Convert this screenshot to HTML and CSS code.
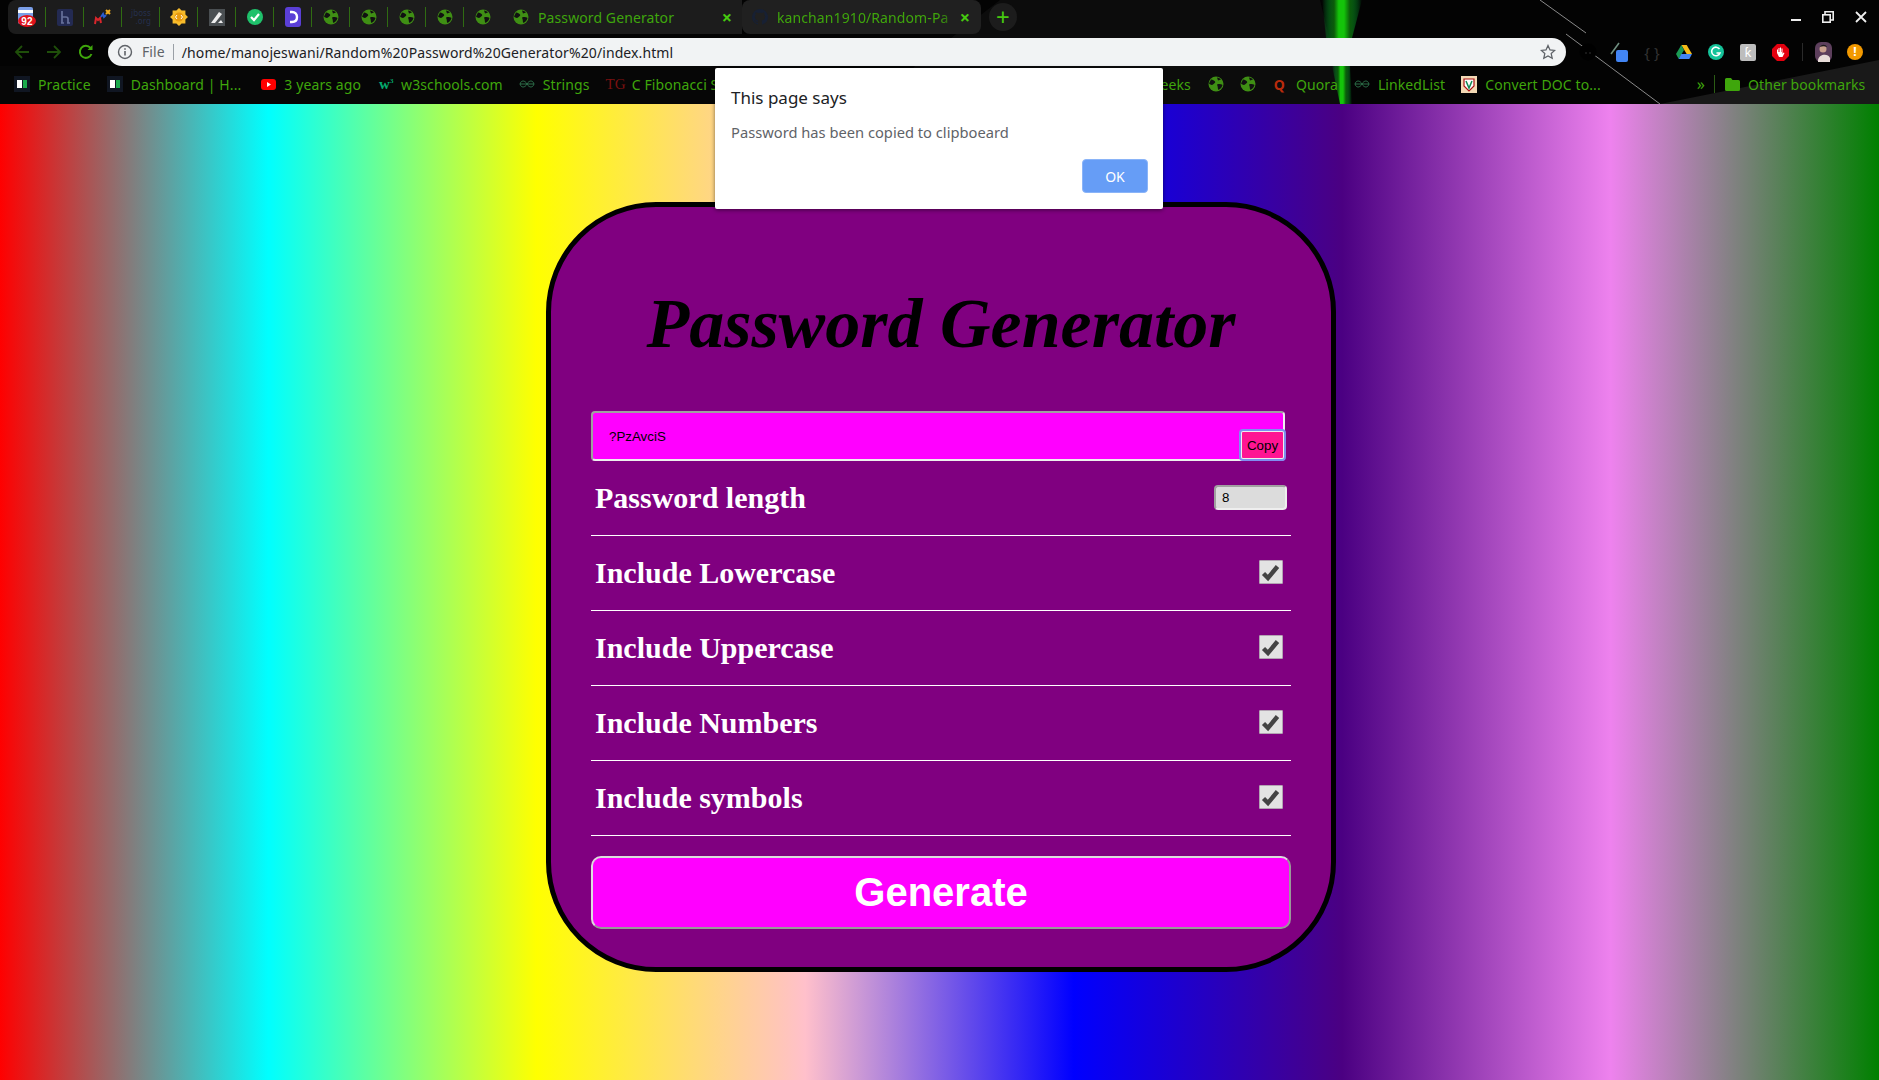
FILE: index.html
```html
<!DOCTYPE html>
<html>
<head>
  <title>Password Generator</title>
  <link rel="stylesheet" href="styles.css">
</head>
<body>
  <header class="browser">
    <svg class="wallpaper" width="1879" height="104" viewBox="0 0 1879 104">
      <defs>
        <linearGradient id="glow" x1="0" x2="1" y1="0" y2="0">
          <stop offset="0" stop-color="#0a3" stop-opacity="0"/>
          <stop offset="0.3" stop-color="#0b5a0a"/>
          <stop offset="0.42" stop-color="#14c40a"/>
          <stop offset="0.55" stop-color="#14c40a"/>
          <stop offset="0.7" stop-color="#0b5a0a"/>
          <stop offset="1" stop-color="#0a3" stop-opacity="0"/>
        </linearGradient>
      </defs>
      <polygon points="0,66 800,66 830,104 0,104" fill="#060606"/>
      <polygon points="1000,0 1320,0 1345,104 880,104 915,66" fill="#0c0c0c"/>
      <polygon points="1660,104 1879,60 1879,104" fill="#191919"/>
      <polygon points="1322,0 1362,0 1352,38 1326,38" fill="url(#glow)"/>
      <polygon points="1332,66 1350,66 1352,104 1340,104" fill="url(#glow)"/>
      <line x1="1540" y1="0" x2="1586" y2="33" stroke="#8a8a8a"/>
      <line x1="1566" y1="34" x2="1660" y2="104" stroke="#8a8a8a"/>
    </svg>

    <div class="tab-strip">
      <div class="pin-tab first"><svg width="20" height="20" viewBox="0 0 20 20"><rect x="1" width="15" height="17" rx="2" fill="#7b9fe8"/><rect x="1" y="3" width="15" height="3" fill="#fff"/><ellipse cx="10" cy="14" rx="9" ry="6" fill="#e0121b"/><text x="10" y="18" class="fav-num">92</text></svg></div>
      <div class="pin-tab"><svg width="16" height="17" viewBox="0 0 16 17"><rect width="16" height="17" rx="2" fill="#232a52"/><path d="M5 2v12M4 14h3M5 8h4c2 0 2 1 2 2v4M10 14h3" stroke="#66709a" stroke-width="1.700" fill="none"/></svg></div>
      <div class="pin-tab"><svg width="18" height="16" viewBox="0 0 18 16"><path d="M1 15l1-6 2 2 2-2 1 5" stroke="#d8262c" stroke-width="2" fill="none"/><path d="M7 8l2-3 1 3 2-2" stroke="#2a5cd0" stroke-width="2" fill="none"/><path d="M12 5l4-4M12 1l4 4" stroke="#f0ad1e" stroke-width="2" fill="none"/></svg></div>
      <div class="pin-tab pin-text">jboss<br>.org</div>
      <div class="pin-tab"><svg width="18" height="18" viewBox="0 0 18 18"><path d="M9 0l2.600 2.600h3.800v3.800L18 9l-2.600 2.600v3.800h-3.800L9 18l-2.600-2.600H2.600v-3.800L0 9l2.600-2.600V2.600h3.800z" fill="#f7bb2a"/><circle cx="9" cy="9" r="4.500" fill="#e89a10"/><path d="M7 7L5.500 9 7 11M11 7l1.500 2L11 11" stroke="#fff" fill="none"/></svg></div>
      <div class="pin-tab"><svg width="16" height="17" viewBox="0 0 16 17"><rect width="16" height="17" fill="#4a4f52"/><path d="M2 14L10 3l3 2-7 9z" fill="#eee"/><path d="M9 14l3-3 2 3z" fill="#eee"/></svg></div>
      <div class="pin-tab"><svg width="16" height="16" viewBox="0 0 16 16"><circle cx="8" cy="8" r="8" fill="#1fc16b"/><path d="M4 8l3 3 5-6" stroke="#fff" stroke-width="2.200" fill="none"/></svg></div>
      <div class="pin-tab"><svg width="16" height="20" viewBox="0 0 16 20"><rect width="16" height="20" rx="3" fill="#5a3fd6"/><path d="M5 5h2c3 0 5 2 5 5s-2 5-5 5H5" stroke="#fff" stroke-width="2.400" fill="none"/></svg></div>
      <div class="pin-tab"><svg class="globe" width="16" height="16" viewBox="0 0 16 16"><use href="#globe-shape"/></svg></div>
      <div class="pin-tab"><svg class="globe" width="16" height="16" viewBox="0 0 16 16"><use href="#globe-shape"/></svg></div>
      <div class="pin-tab"><svg class="globe" width="16" height="16" viewBox="0 0 16 16"><use href="#globe-shape"/></svg></div>
      <div class="pin-tab"><svg class="globe" width="16" height="16" viewBox="0 0 16 16"><use href="#globe-shape"/></svg></div>
      <div class="pin-tab last"><svg class="globe" width="16" height="16" viewBox="0 0 16 16"><use href="#globe-shape"/></svg></div>
      <div class="tab current">
        <svg class="globe" width="16" height="16" viewBox="0 0 16 16"><use href="#globe-shape"/></svg>
        <span class="tab-title">Password Generator</span>
        <span class="tab-close">×</span>
      </div>
      <div class="tab active">
        <svg width="16" height="16" viewBox="0 0 16 16"><path d="M8 0a8 8 0 0 0-2.500 15.600c.4.100.5-.2.5-.4v-1.400c-2.200.5-2.700-1-2.700-1-.4-.9-.9-1.200-.9-1.200-.7-.5.100-.5.100-.5.800.100 1.200.8 1.200.8.700 1.200 1.900.9 2.300.7.100-.5.300-.9.500-1.100-1.800-.2-3.600-.9-3.600-4 0-.9.300-1.600.8-2.100-.1-.2-.4-1 .1-2.100 0 0 .7-.2 2.200.8a7.600 7.600 0 0 1 4 0c1.500-1 2.200-.8 2.200-.8.400 1.100.2 1.900.1 2.100.5.500.8 1.200.8 2.100 0 3.100-1.900 3.800-3.700 4 .3.300.6.800.6 1.500v2.200c0 .2.100.5.500.4A8 8 0 0 0 8 0z" fill="#172033"/></svg>
        <span class="tab-title fade">kanchan1910/Random-Pa</span>
        <span class="tab-close">×</span>
      </div>
      <div class="new-tab">+</div>
      <div class="win-btns">
        <span class="win-min"></span>
        <svg width="12" height="12" viewBox="0 0 12 12"><path d="M3 3V0.800h8.200V9H9" stroke="#eee" stroke-width="1.600" fill="none"/><rect x="0.800" y="3.800" width="7.400" height="7.400" stroke="#eee" stroke-width="1.600" fill="none"/></svg>
        <svg width="12" height="12" viewBox="0 0 12 12"><path d="M1 1l10 10M11 1L1 11" stroke="#eee" stroke-width="1.800"/></svg>
      </div>
    </div>

    <div class="toolbar">
      <svg class="nav-icon dim" width="18" height="18" viewBox="0 0 18 18"><path d="M16 9H3M9 3L3 9l6 6" stroke="currentColor" stroke-width="1.800" fill="none"/></svg>
      <svg class="nav-icon dim" width="18" height="18" viewBox="0 0 18 18"><path d="M2 9h13M9 3l6 6-6 6" stroke="currentColor" stroke-width="1.800" fill="none"/></svg>
      <svg class="nav-icon" width="18" height="18" viewBox="0 0 18 18"><path d="M14.500 11a6 6 0 1 1-1-6" stroke="currentColor" stroke-width="2" fill="none"/><path d="M15.500 2v5h-5z" fill="currentColor"/></svg>
      <div class="omnibox">
        <svg width="16" height="16" viewBox="0 0 16 16"><circle cx="8" cy="8" r="6.500" stroke="#5f6368" stroke-width="1.400" fill="none"/><path d="M8 7v4.500M8 4.200v1.600" stroke="#5f6368" stroke-width="1.600"/></svg>
        <span class="scheme">File</span>
        <span class="url">/home/manojeswani/Random%20Password%20Generator%20/index.html</span>
        <svg class="star" width="16" height="16" viewBox="0 0 16 16"><path d="M8 1.500l2 4.400 4.700.5-3.500 3.200 1 4.700L8 11.900l-4.200 2.400 1-4.700L1.300 6.400 6 5.900z" stroke="#5f6368" stroke-width="1.300" fill="none"/></svg>
      </div>
      <div class="extensions">
        <span class="ext"><svg width="18" height="18" viewBox="0 0 18 18"><circle cx="9" cy="9" r="8.500" fill="#000"/><circle cx="7" cy="10" r=".7" fill="#444"/><circle cx="11" cy="10" r=".7" fill="#444"/></svg></span>
        <span class="ext"><svg width="22" height="26" viewBox="0 0 22 26"><path d="M2 15L10 4" stroke="#6f8f80" stroke-width="1.600"/><rect x="7" y="11" width="12" height="12" rx="2" fill="#4285f4"/></svg></span>
        <span class="ext braces">{ }</span>
        <span class="ext"><svg width="16" height="14" viewBox="0 0 16 14"><path d="M5.300 0h5.400L16 9h-5.300z" fill="#f6bb18"/><path d="M5.300 0L0 9l2.700 5 5.300-9z" fill="#1a9a54"/><path d="M2.700 14h10.600L16 9H5.300z" fill="#4285f4"/></svg></span>
        <span class="ext"><svg width="16" height="16" viewBox="0 0 16 16"><circle cx="8" cy="8" r="8" fill="#15c39a"/><path d="M11.500 5a4.300 4.300 0 1 0 .5 4H8.500" stroke="#fff" stroke-width="1.600" fill="none"/></svg></span>
        <span class="ext"><span class="ext-k">ƙ</span></span>
        <span class="ext"><svg width="17" height="17" viewBox="0 0 17 17"><path d="M5 0h7l5 5v7l-5 5H5l-5-5V5z" fill="#e3000f"/><path d="M5 9V5.500h1V8h.5V4h1v4H8V3.500h1V8h.5V4.500h1V10l1-1.500 1 .5-2 4H7z" fill="#fff"/></svg></span>
        <span class="ext-sep"></span>
        <span class="ext"><svg width="17" height="20" viewBox="0 0 17 20"><rect width="17" height="20" rx="6" fill="#5d3f5c"/><circle cx="8" cy="7" r="3.500" fill="#c9a08e"/><path d="M3 18c1-6 10-7 12-2v4H3z" fill="#e8dcd8"/><path d="M5 5c1-3 6-3 7 0-2-1-5-1-7 0z" fill="#1d1a1c"/></svg></span>
        <span class="ext"><span class="ext-alert">!</span></span>
      </div>
    </div>

    <div class="bookmarks">
      <div class="mark gap-16"><span class="hr-icon"><i></i><b></b></span>Practice</div>
      <div class="mark gap-20"><span class="hr-icon"><i></i><b></b></span>Dashboard | H...</div>
      <div class="mark"><svg width="15" height="15" viewBox="0 0 15 15"><rect width="15" height="11" y="2" rx="3" fill="#f00"/><path d="M6 5l4 2.500L6 10z" fill="#fff"/></svg>3 years ago</div>
      <div class="mark gap-16"><span class="w3">w<sup>3</sup></span>w3schools.com</div>
      <div class="mark gap-16"><svg class="infinity" width="16" height="10" viewBox="0 0 16 10"><path d="M1 5c1-4 5-4 7 0s6 4 7 0M1 5c1 4 5 4 7 0s6-4 7 0M1 5h14" stroke="#2c6e49" fill="none"/></svg>Strings</div>
      <div class="mark"><span class="tg">TG</span>C Fibonacci Series</div>
      <div class="mark geeks">GeeksforGeeks</div>
      <div class="mark gap-16"><svg class="globe" width="16" height="16" viewBox="0 0 16 16"><use href="#globe-shape"/></svg></div>
      <div class="mark"><svg class="globe" width="16" height="16" viewBox="0 0 16 16"><use href="#globe-shape"/></svg></div>
      <div class="mark gap-16"><span class="q-icon">Q</span>Quora</div>
      <div class="mark gap-16"><svg class="infinity" width="16" height="10" viewBox="0 0 16 10"><path d="M1 5c1-4 5-4 7 0s6 4 7 0M1 5c1 4 5 4 7 0s6-4 7 0M1 5h14" stroke="#2c6e49" fill="none"/></svg>LinkedList</div>
      <div class="mark"><svg width="16" height="17" viewBox="0 0 16 17"><rect width="16" height="17" fill="#f3d9b5"/><path d="M3 3h10v7l-5 5-5-5z" fill="#fff" stroke="#a11" stroke-width="1.200"/><path d="M5 5l3 7 3-7" stroke="#185" stroke-width="1.500" fill="none"/></svg>Convert DOC to...</div>
      <div class="more">»</div>
      <div class="mark other"><svg width="15" height="13" viewBox="0 0 15 13"><path d="M0 1.500A1.500 1.500 0 0 1 1.500 0H6l1.500 2h6A1.500 1.500 0 0 1 15 3.500v8a1.500 1.500 0 0 1-1.500 1.500h-12A1.500 1.500 0 0 1 0 11.500z" fill="#3fa60c"/></svg>Other bookmarks</div>
    </div>
  </header>

  <svg class="defs-only" width="0" height="0">
    <symbol id="globe-shape" viewBox="0 0 16 16">
      <circle cx="8" cy="8" r="7.500" fill="#3f8f14"/>
      <path d="M3 3.500c2 0 3 1 4 2s-1 2-2 3-3 0-4-1zM9 1.500c2 0 3 1 4 2l-3 1zM10 8c2 0 4 0 4.500 1-.5 2-2 4-4 5-1-1-.5-3-1-4s-.5-2 .5-2z" fill="#111"/>
    </symbol>
  </svg>

  <main class="page">
    <div class="card">
      <h1 class="title">Password Generator</h1>
      <div class="result">
        <input class="result-input" type="text" value="?PzAvciS">
        <button class="copy">Copy</button>
      </div>
      <div class="row row-length">
        <label>Password length</label>
        <input class="length" type="number" value="8">
      </div>
      <div class="row">
        <label>Include Lowercase</label>
        <span class="check"><svg width="22" height="22" viewBox="0 0 22 22"><path d="M3.500 12.500l4.500 4.500 9.500-11.500" stroke="#444" stroke-width="4.400" fill="none"/></svg></span>
      </div>
      <div class="row">
        <label>Include Uppercase</label>
        <span class="check"><svg width="22" height="22" viewBox="0 0 22 22"><path d="M3.500 12.500l4.500 4.500 9.500-11.500" stroke="#444" stroke-width="4.400" fill="none"/></svg></span>
      </div>
      <div class="row">
        <label>Include Numbers</label>
        <span class="check"><svg width="22" height="22" viewBox="0 0 22 22"><path d="M3.500 12.500l4.500 4.500 9.500-11.500" stroke="#444" stroke-width="4.400" fill="none"/></svg></span>
      </div>
      <div class="row">
        <label>Include symbols</label>
        <span class="check"><svg width="22" height="22" viewBox="0 0 22 22"><path d="M3.500 12.500l4.500 4.500 9.500-11.500" stroke="#444" stroke-width="4.400" fill="none"/></svg></span>
      </div>
      <button class="generate">Generate</button>
    </div>
  </main>

  <div class="alert">
    <div class="alert-title">This page says</div>
    <div class="alert-msg">Password has been copied to clipboeard</div>
    <div class="alert-actions"><button class="alert-ok">OK</button></div>
  </div>
</body>
</html>
```

FILE: styles.css
```css
* {
  box-sizing: border-box;
}
html, body {
  margin: 0;
  height: 1080px;
  overflow: hidden;
}
body {
  font-family: "Noto Sans", sans-serif;
  position: relative;
  background: #000;
}
.defs-only {
  position: absolute;
}

/* browser chrome */
.browser {
  position: relative;
  height: 104px;
  background: #030303;
  color: #3fa60c;
  letter-spacing: 0.1px;
}
.wallpaper {
  position: absolute;
  left: 0;
  top: 0;
}
.tab-strip, .toolbar, .bookmarks {
  position: relative;
  display: flex;
  align-items: center;
}
.tab-strip {
  height: 38px;
  padding: 0 0 4px 8px;
}
.pin-tab {
  width: 38px;
  height: 34px;
  display: flex;
  align-items: center;
  justify-content: center;
  background: linear-gradient(#2f6b12, #2f6b12) right center / 1px 20px no-repeat, #1c1c1c;
  flex: none;
}
.pin-tab.first {
  border-radius: 8px 0 0 8px;
}
.pin-tab.last {
  background: #1c1c1c;
}
.pin-text {
  font-size: 8px;
  line-height: 8px;
  color: #25304e;
  text-align: right;
}
.fav-num {
  font-family: "Liberation Sans", sans-serif;
  font-size: 10px;
  font-weight: bold;
  fill: #fff;
  text-anchor: middle;
}
.tab {
  height: 34px;
  display: flex;
  align-items: center;
  font-size: 14px;
  flex: none;
}
.tab.current {
  width: 240px;
  padding-left: 11px;
  background: #1c1c1c;
}
.tab.active {
  width: 239px;
  padding-left: 10px;
  background: #202020;
  border-radius: 8px;
}
.tab-title {
  margin-left: 9px;
  white-space: nowrap;
  overflow: hidden;
}
.tab.current .tab-title {
  width: 182px;
}
.tab-title.fade {
  width: 181px;
  -webkit-mask-image: linear-gradient(90deg, #000 90%, transparent);
  mask-image: linear-gradient(90deg, #000 90%, transparent);
}
.tab-close {
  font-size: 18px;
  font-weight: bold;
  line-height: 18px;
  color: #46c90f;
  width: 14px;
  text-align: center;
}
.new-tab {
  width: 28px;
  height: 28px;
  margin-left: 8px;
  border-radius: 50%;
  background: #1c1c1c;
  color: #46c90f;
  font-size: 24px;
  line-height: 27px;
  text-align: center;
  flex: none;
}
.win-btns {
  margin-left: auto;
  display: flex;
  align-items: center;
  gap: 21px;
  padding-right: 12px;
  height: 34px;
}
.win-min {
  width: 10px;
  height: 2px;
  background: #eee;
  margin-top: 6px;
}
.toolbar {
  height: 28px;
  padding-left: 13px;
}
.nav-icon {
  margin-right: 14px;
  color: #3fa60c;
  flex: none;
}
.nav-icon.dim {
  color: #1f4f0a;
}
.omnibox {
  width: 1458px;
  height: 28px;
  margin-left: -1px;
  background: #f1f3f4;
  border-radius: 14px;
  display: flex;
  align-items: center;
  padding: 0 9px 0 9px;
  font-size: 14px;
  color: #202124;
  flex: none;
}
.scheme {
  color: #5f6368;
  margin-left: 9px;
  padding-right: 8px;
  border-right: 1px solid #9aa0a6;
  line-height: 16px;
}
.url {
  margin-left: 8px;
}
.star {
  margin-left: auto;
  margin-right: 1px;
}
.extensions {
  display: flex;
  align-items: center;
  margin-left: 6px;
}
.ext {
  width: 32px;
  height: 28px;
  display: flex;
  align-items: center;
  justify-content: center;
  flex: none;
}
.braces {
  color: #333;
  font-size: 15px;
}
.ext-k {
  width: 16px;
  height: 17px;
  background: #bdbdbd;
  color: #fff;
  font-size: 13px;
  line-height: 17px;
  text-align: center;
  border-radius: 2px;
}
.ext-sep {
  width: 1px;
  height: 18px;
  background: #2a2a2a;
  margin: 0 4px 0 6px;
}
.ext-alert {
  width: 16px;
  height: 16px;
  border-radius: 50%;
  background: #f29900;
  color: #fff;
  font-size: 12px;
  font-weight: bold;
  line-height: 16px;
  text-align: center;
}
.bookmarks {
  height: 36px;
  padding-left: 14px;
  font-size: 14px;
  white-space: nowrap;
}
.mark {
  display: flex;
  align-items: center;
  gap: 8px;
  margin-right: 18px;
  flex: none;
}
.mark.gap-16 {
  margin-right: 16px;
}
.mark.gap-20 {
  margin-right: 20px;
}
.hr-icon {
  width: 16px;
  height: 16px;
  background: #101622;
  display: flex;
  align-items: center;
  justify-content: center;
  gap: 1px;
}
.hr-icon i {
  width: 5px;
  height: 8px;
  background: #fff;
}
.hr-icon b {
  width: 4px;
  height: 8px;
  background: #1ba94c;
}
.w3 {
  color: #04aa6d;
  font-family: "Liberation Serif", serif;
  font-size: 15px;
  font-weight: bold;
  width: 14px;
}
.w3 sup {
  font-size: 7px;
}
.tg {
  color: #7a1010;
  font-family: "Liberation Serif", serif;
  font-size: 15px;
  margin-right: -2px;
}
.geeks {
  width: 120px;
  justify-content: flex-end;
  margin-left: 302px;
  margin-right: 17px;
}
.q-icon {
  color: #b92b0c;
  font-weight: bold;
  font-size: 14px;
  margin-right: 3px;
}
.more {
  margin-left: 78px;
  padding-right: 9px;
  border-right: 1px solid #2b5c14;
  margin-right: 10px;
  font-size: 16px;
  line-height: 18px;
}
.other {
  margin-right: 0;
}

/* page */
.page {
  height: 976px;
  padding: 98px 0 0 3px;
  display: flex;
  justify-content: center;
  align-items: flex-start;
  background: linear-gradient(90deg, red, cyan, yellow, pink, blue, indigo, violet, green);
}
.card {
  width: 790px;
  height: 770px;
  padding: 0 40px;
  border: 5px solid #000;
  border-radius: 110px;
  background: purple;
  font-family: "Liberation Serif", serif;
}
.title {
  margin: 0;
  height: 204px;
  padding-top: 75px;
  font-size: 70px;
  font-style: italic;
  font-weight: bold;
  line-height: 83px;
  text-align: center;
  color: #000;
}
.result {
  position: relative;
  width: 694px;
  height: 50px;
}
.result-input {
  width: 100%;
  height: 100%;
  padding: 0 16px;
  border: 2px solid;
  border-color: #a0a0a0 #eee #eee #a0a0a0;
  border-radius: 4px;
  background: #f0f;
  color: #000;
  font-family: "Liberation Sans", sans-serif;
  font-size: 13.33px;
}
.copy {
  position: absolute;
  right: 0;
  bottom: 1px;
  width: 45px;
  height: 30px;
  padding: 0;
  background: #ff1493;
  border: 2px solid #eee;
  outline: 2px solid #7f8df0;
  outline-offset: -1px;
  border-radius: 3px;
  color: #000;
  font-family: "Liberation Sans", sans-serif;
  font-size: 13.33px;
}
.row {
  height: 75px;
  display: flex;
  align-items: center;
  justify-content: space-between;
  padding: 0 8px 0 4px;
  border-bottom: 1px solid #fff;
  color: #fff;
  font-size: 30px;
  font-weight: bold;
}
.row-length {
  padding-right: 4px;
}
.length {
  width: 73px;
  height: 25px;
  margin-bottom: 1px;
  padding: 0 6px;
  border: 2px solid;
  border-color: #a0a0a0 #eee #eee #a0a0a0;
  border-radius: 4px;
  background: #dcdcdc;
  color: #000;
  font-family: "Liberation Sans", sans-serif;
  font-size: 13.33px;
}
.check {
  width: 24px;
  height: 24px;
  margin-bottom: 2px;
  display: flex;
  align-items: center;
  justify-content: center;
  background: #e3e3e3;
  border: 1px solid #b3a3b3;
  border-radius: 1px;
}
.generate {
  width: 700px;
  height: 73px;
  margin-top: 20px;
  padding: 0;
  display: block;
  background: #f0f;
  border: 2px solid;
  border-color: #ddd #999 #999 #ddd;
  border-radius: 10px;
  color: #fff;
  font-family: "Liberation Sans", sans-serif;
  font-size: 40px;
  font-weight: bold;
}

/* alert dialog */
.alert {
  position: absolute;
  left: 715px;
  top: 68px;
  width: 448px;
  height: 141px;
  padding: 20px 15px 16px 16px;
  background: #fff;
  border-radius: 2px;
  box-shadow: 0 1px 4px rgba(0, 0, 0, 0.5);
}
.alert-title {
  font-size: 17px;
  line-height: 20px;
  color: #202124;
}
.alert-msg {
  margin-top: 14px;
  font-size: 14.7px;
  line-height: 20px;
  color: #5f6368;
}
.alert-actions {
  display: flex;
  justify-content: flex-end;
  margin-top: 17px;
}
.alert-ok {
  width: 66px;
  height: 34px;
  padding: 0;
  background: #669df6;
  border: 1px solid #8ab4f8;
  border-radius: 4px;
  color: #fff;
  font-family: "Noto Sans", sans-serif;
  font-size: 14px;
}
```
